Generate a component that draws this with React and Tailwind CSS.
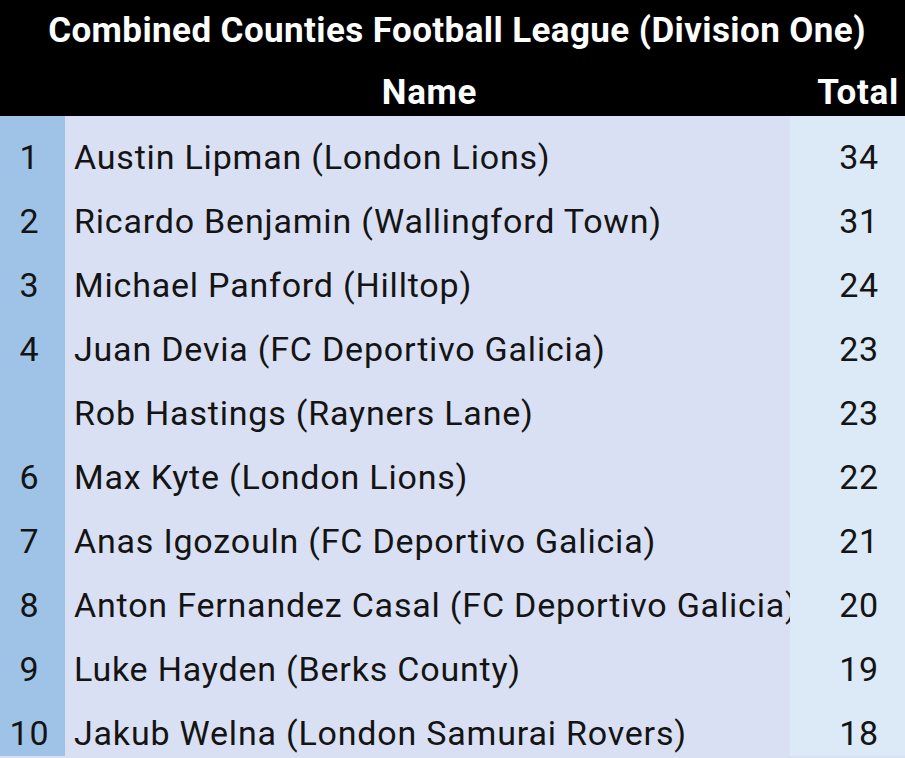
const rows = [
  { rank: "1", name: "Austin Lipman (London Lions)", total: 34 },
  { rank: "2", name: "Ricardo Benjamin (Wallingford Town)", total: 31 },
  { rank: "3", name: "Michael Panford (Hilltop)", total: 24 },
  { rank: "4", name: "Juan Devia (FC Deportivo Galicia)", total: 23 },
  { rank: "", name: "Rob Hastings (Rayners Lane)", total: 23 },
  { rank: "6", name: "Max Kyte (London Lions)", total: 22 },
  { rank: "7", name: "Anas Igozouln (FC Deportivo Galicia)", total: 21 },
  { rank: "8", name: "Anton Fernandez Casal (FC Deportivo Galicia)", total: 20 },
  { rank: "9", name: "Luke Hayden (Berks County)", total: 19 },
  { rank: "10", name: "Jakub Welna (London Samurai Rovers)", total: 18 },
];

export default function App() {
  return (
    <div className="w-[905px] h-[758px] overflow-hidden bg-[#d9e0f3] font-['Roboto',sans-serif]">
      {/* header */}
      <div className="bg-black text-white font-bold text-[35px]">
        <div className="h-[62px] flex items-center justify-center pl-[9px] tracking-[0.4px]">
          Combined Counties Football League (Division One)
        </div>
        <div className="h-[54px] flex items-center pt-[8px] tracking-[0.7px]">
          <div className="w-[69px]" />
          <div className="w-[721px] text-center">Name</div>
          <div className="flex-1 text-right pr-[6px]">Total</div>
        </div>
      </div>

      {/* rows */}
      <div className="flex text-[34px] tracking-[0.8px] text-[#141414]">
        <div className="w-[65px] bg-[#9fc3e7]">
          {rows.map((r, i) => (
            <div key={i} className="h-[64px] pt-[18px] flex items-center justify-center pr-[6px]">
              {r.rank}
            </div>
          ))}
        </div>
        <div className="w-[725px] bg-[#d9e0f3]">
          {rows.map((r, i) => (
            <div key={i} className="h-[64px] pt-[18px] flex items-center pl-[9px] whitespace-nowrap overflow-hidden">
              {r.name}
            </div>
          ))}
        </div>
        <div className="flex-1 bg-[#dce9f6]">
          {rows.map((r, i) => (
            <div key={i} className="h-[64px] pt-[18px] flex items-center justify-end pr-[26px]">
              {r.total}
            </div>
          ))}
        </div>
      </div>
    </div>
  );
}
